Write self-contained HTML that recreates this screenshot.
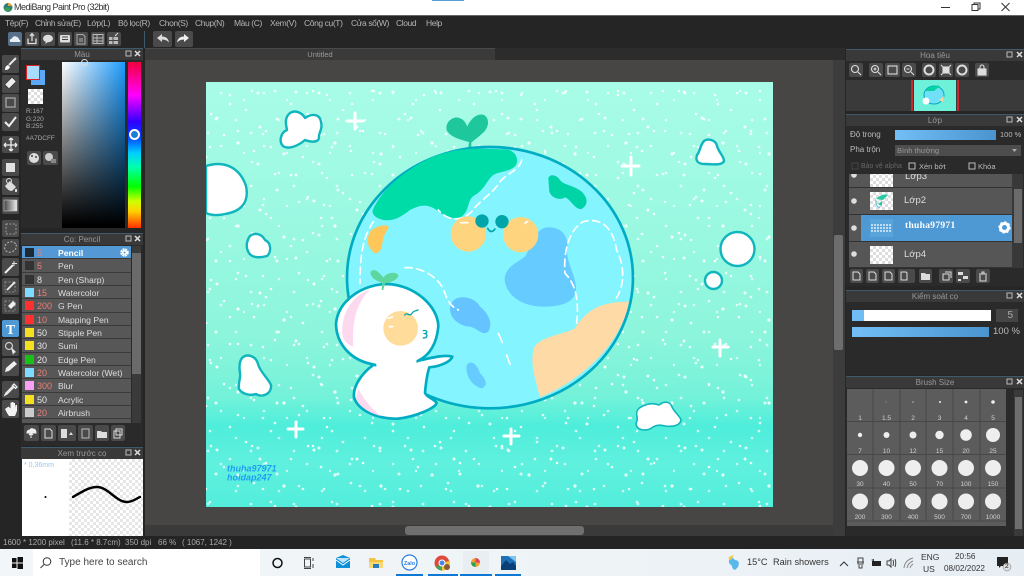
<!DOCTYPE html>
<html><head><meta charset="utf-8"><title>MediBang Paint Pro</title>
<style>
*{box-sizing:border-box}
html,body{margin:0;padding:0;width:1024px;height:576px;overflow:hidden;background:#252525;font-family:"Liberation Sans","Noto Sans CJK SC",sans-serif}
.a{position:absolute}
.t{position:absolute;white-space:nowrap;line-height:1;font-size:9px;color:#c4c4c4}
.m{position:absolute;top:19px;white-space:nowrap;line-height:1;font-size:8.5px;letter-spacing:-.4px;color:#b4b4b4}
.h{position:absolute;height:12px;background:#393939;border-top:1px solid #3f5a6c;color:#999;font-size:8px;line-height:11px;text-align:center}
.ck{background:repeating-conic-gradient(#ddd 0 25%,#fff 0 50%) 0 0/6px 6px}
.r{position:absolute;left:22px;width:109px;height:13.33px;background:#575757;border-bottom:1px solid #3a3a3a}
.r i{position:absolute;left:3px;top:2px;width:9px;height:9px}
.r b{position:absolute;left:15px;top:2px;font:400 9px/10px "Liberation Sans",sans-serif;color:#e6e6e6}
.r b.p{color:#ea7f7a}
.r span{position:absolute;left:36px;top:2px;font-size:8.6px;line-height:10px;color:#ddd;white-space:nowrap}
.lr{position:absolute;left:849px;width:163px;background:#565656;border-bottom:1px solid #333}
</style></head><body>

<!-- chrome -->
<div class="a" style="left:0;top:0;width:1024px;height:15px;background:#fff"></div>
<div class="a" style="left:432px;top:0;width:32px;height:1px;background:#5a9ed6"></div>
<div class="a" style="left:0;top:15px;width:1024px;height:1px;background:#666"></div>
<div class="a" style="left:0;top:16px;width:1024px;height:33px;background:#252525"></div>
<div class="a" style="left:144px;top:31px;width:1px;height:17px;background:#3f5a6c"></div>

<!-- canvas area -->
<div class="a" style="left:145px;top:48px;width:700px;height:488px;background:#474645"></div>
<div class="a" style="left:145px;top:48px;width:350px;height:12px;background:#3a3a3a;border-top:1px solid #4a4a4a;color:#999;font-size:7.5px;line-height:11px;text-align:center">Untitled</div>
<div class="a" style="left:495px;top:48px;width:350px;height:12px;background:#2c2c2c"></div>
<div class="a" style="left:145px;top:525px;width:690px;height:11px;background:#3a3a3a"></div>
<div class="a" style="left:833px;top:60px;width:12px;height:476px;background:#3c3c3c"></div>
<div class="a" style="left:834px;top:235px;width:9px;height:115px;background:#6d6d6d;border-radius:2px"></div>
<div class="a" style="left:405px;top:526px;width:179px;height:9px;background:#6f6f6f;border-radius:3px"></div>

<!-- art -->
<svg class="a" style="left:0;top:0" width="1024" height="576" viewBox="0 0 1024 576">
<defs>
<linearGradient id="bg" x1="0" y1="0" x2="0" y2="1">
<stop offset="0" stop-color="#a8fce7"/><stop offset=".35" stop-color="#9af8e1"/><stop offset=".6" stop-color="#8cf5dc"/><stop offset=".74" stop-color="#74f2d9"/><stop offset=".81" stop-color="#4eeedb"/><stop offset=".9" stop-color="#60f0de"/><stop offset="1" stop-color="#52eedb"/>
</linearGradient>
<pattern id="s1" width="97" height="83" patternUnits="userSpaceOnUse">
<g fill="#fff"><circle cx="5" cy="9" r="1.5"/><circle cx="17" cy="31" r="1.3"/><circle cx="23" cy="35" r="1.5"/><circle cx="36" cy="12" r="1.3"/><circle cx="44" cy="60" r="1.6"/><circle cx="52" cy="27" r="1.3"/><circle cx="60" cy="68" r="1.3"/><circle cx="66" cy="44" r="1.5"/><circle cx="72" cy="48" r="1.3"/><circle cx="81" cy="8" r="1.3"/><circle cx="90" cy="71" r="1.6"/><circle cx="12" cy="74" r="1.3"/><circle cx="30" cy="52" r="1.3"/></g>
</pattern>
<pattern id="s2" width="61" height="71" patternUnits="userSpaceOnUse">
<g fill="#fff"><circle cx="8" cy="20" r="1.3"/><circle cx="14" cy="22" r="1.5"/><circle cx="27" cy="5" r="1.3"/><circle cx="33" cy="48" r="1.5"/><circle cx="47" cy="33" r="1.3"/><circle cx="55" cy="60" r="1.3"/><circle cx="19" cy="63" r="1.3"/></g>
</pattern>
<pattern id="s3" width="43" height="53" patternUnits="userSpaceOnUse">
<g fill="#fff"><circle cx="6" cy="40" r="1.3"/><circle cx="21" cy="14" r="1.3"/><circle cx="36" cy="27" r="1.4"/><circle cx="29" cy="47" r="1.2"/></g>
</pattern>
<clipPath id="cv"><rect x="206" y="82" width="567" height="425"/></clipPath>
</defs>
<rect x="206" y="82" width="567" height="425" fill="url(#bg)"/>
<rect x="206" y="82" width="567" height="425" fill="url(#s1)" opacity=".85"/>
<rect x="206" y="82" width="567" height="425" fill="url(#s2)" opacity=".8"/>
<rect x="206" y="82" width="567" height="425" fill="url(#s3)" opacity=".7"/>

<g clip-path="url(#cv)">
<!-- stars -->
<g stroke="#fff" stroke-width="3" stroke-linecap="round">
<path d="M347 121h16M355 113v16M622 166h17M631 157v18M288 429h15M296 422v15M504 436h15M511 429v15M713 347h15M720 340v16"/>
</g>
<!-- clouds -->
<g fill="#fff" stroke="#10b5bd" stroke-width="2.4" stroke-linejoin="round">
<path d="M206 166 C225 160 240 168 246 186 C250 205 238 212 225 214 C217 216 210 215 206 213Z"/>
<path d="M290 113 C296 109 303 114 305 118 C312 113 320 114 321 122 C323 130 318 133 319 138 C318 143 310 142 305 140 C298 146 288 150 283 146 C279 142 280 133 287 130 C286 125 284 118 290 113Z"/>
<path d="M250 236 C255 232 262 234 265 240 C272 243 271 253 267 256 C260 258 252 258 249 253 C245 247 247 240 250 236Z"/>
<path d="M704 141 C708 138 716 140 717 146 C719 153 724 156 724 161 C722 166 712 164 705 164 C698 164 695 161 697 155 C700 152 700 145 704 141Z"/>
<circle cx="737.5" cy="249" r="17"/>
<circle cx="713.5" cy="280.5" r="8.5"/>
<path d="M242 358 C247 353 256 356 258 364 C260 372 268 378 271 385 C272 394 262 398 256 394 C250 396 242 394 239 389 C238 382 241 378 240 373 C239 367 239 362 242 358Z"/>
<path d="M641 407 C648 403 654 403 659 405 C664 401 670 401 672 407 C675 413 680 416 681 420 C680 426 672 427 665 426 C658 424 654 426 650 429 C644 431 637 430 636 424 C637 420 638 419 637 417 C636 412 637 409 641 407Z" stroke-width="1.6"/>
</g>
</g>

<g transform="translate(330 110) scale(.3333)">
<!-- sprout -->
<path d="M415 112 L417 96 C395 90 360 82 350 60 C345 35 370 15 392 25 C402 30 408 40 412 50 C420 30 440 8 462 15 C480 25 478 55 455 72 C445 82 430 92 424 98 L424 112Z" fill="#1fc79c"/>
<!-- globe -->
<ellipse cx="480" cy="503" rx="429" ry="392" fill="#84f4ff" stroke="#00acc3" stroke-width="8"/>
<!-- green land -->
<path d="M128 300 C150 250 200 200 270 160 C320 130 380 118 440 116 L530 118 C555 122 568 145 558 165 C545 185 505 185 490 195 C470 210 465 240 430 258 C410 275 420 300 395 320 C370 330 345 320 320 300 C290 280 270 285 240 300 C215 320 190 335 160 330 C140 325 125 315 128 300Z" fill="#00dca8"/>
<path d="M655 205 C660 190 680 195 690 210 C700 225 730 225 755 245 C775 265 775 285 755 297 C735 300 720 265 705 262 C690 272 665 265 658 245Z" fill="#00d3a5"/>
<!-- orange -->
<path d="M120 365 C135 350 165 340 177 350 C170 365 160 375 158 395 C155 415 150 430 135 430 C120 420 110 400 113 385Z" fill="#ffc65a"/>
<!-- lakes -->
<path d="M650 352 C690 348 715 375 712 410 C705 450 735 490 738 530 C740 575 700 590 640 590 C580 590 530 560 524 510 C525 470 560 460 585 440 C600 420 610 358 650 352Z" fill="#66ccff"/>
<path d="M380 565 C410 555 440 570 450 590 C475 610 490 640 475 665 C455 680 440 650 415 650 C385 645 360 625 360 595 C362 578 370 570 380 565Z" fill="#65c4ff"/>
<path d="M410 765 C425 745 445 770 450 790 C465 805 478 825 455 835 C430 830 405 800 410 765Z" fill="#66ccff"/>
<!-- sand -->
<path d="M610 720 C620 680 700 675 735 655 C770 600 810 575 897 575 C880 680 780 800 630 862 C620 820 600 770 610 720Z" fill="#fddaa6"/>
<!-- dashes -->
<g fill="none" stroke="#fff" stroke-width="5" stroke-linecap="round" stroke-dasharray="22 14">
<path d="M575 150 C570 180 530 190 510 215 C490 250 450 270 425 305 C400 330 360 340 325 300"/>
<path d="M130 335 C100 380 90 430 90 520"/>
<path d="M225 473 C270 470 330 500 345 550 C360 590 370 590 385 600"/>
<path d="M505 670 C520 700 530 740 545 775" stroke-dasharray="30 40"/>
<path d="M740 640 C745 590 745 530 705 490 C700 430 715 360 760 335 C820 320 850 360 860 420 C885 470 885 530 855 570"/>
</g>
<!-- cheeks -->
<circle cx="415" cy="372" r="53" fill="#ffd47e"/><circle cx="572" cy="374" r="53" fill="#ffd47e"/>
<path d="M392 338h22M585 340l8-6" stroke="#fff" stroke-width="5" stroke-linecap="round"/>
<circle cx="456" cy="333" r="20" fill="#00a5aa"/><circle cx="516" cy="335" r="20" fill="#00a5aa"/>
<path d="M473 355q10 18 22 2" fill="none" stroke="#00a5aa" stroke-width="5" stroke-linecap="round"/>
<!-- character -->
<path d="M130 765 C95 790 68 830 72 862 C85 905 150 928 205 926 C255 920 318 895 320 878 C305 862 290 862 285 848 C288 815 292 790 298 772 C330 770 362 755 367 740 C340 733 300 745 265 752Z" fill="#fff" stroke="#00acc1" stroke-width="8" stroke-linejoin="round"/>
<path d="M85 835 C100 870 130 900 152 918 C120 910 85 890 78 865Z" fill="#fdd9f0"/>
<path d="M128 763 C60 750 18 700 18 640 C25 570 100 522 172 522 C255 525 325 590 325 650 C320 700 300 735 265 752 C220 775 170 775 128 763Z" fill="#fff" stroke="#00acc1" stroke-width="8"/>
<path d="M38 680 C30 620 60 560 120 538 C85 575 65 620 70 710 C55 705 42 695 38 680Z" fill="#fdd9f0"/>
<path d="M138 740 L258 735 L262 790 L140 790Z" fill="#fff"/>
<circle cx="212" cy="655" r="52" fill="#ffdc9a"/>
<path d="M175 625l12-4M178 650h10" stroke="#fff" stroke-width="5" stroke-linecap="round"/>
<path d="M224 615 C232 605 238 622 246 610 C252 600 258 604 264 600" fill="none" stroke="#00a5aa" stroke-width="4" stroke-linecap="round"/>
<path d="M280 662 C292 660 294 668 285 671 C294 673 293 684 280 684" fill="none" stroke="#00a5aa" stroke-width="4" stroke-linecap="round"/>
<path d="M155 540 L157 518 C140 515 118 500 122 485 C135 472 150 490 160 503 C170 488 195 483 205 495 C205 510 180 518 165 520 L160 540Z" fill="#5ed79e"/>
</g>
<text x="227" y="471.5" font-family="Liberation Sans" font-size="9" font-weight="700" font-style="italic" fill="#1e9ff5">thuha97971</text>
<text x="227" y="480.5" font-family="Liberation Sans" font-size="9" font-weight="700" font-style="italic" fill="#1e9ff5">hoidap247</text>

<!-- left dock backgrounds -->
<rect x="0" y="48" width="145" height="488" fill="#252525"/>
</svg>

<!-- title bar -->
<svg class="a" style="left:3px;top:2px" width="10" height="11" viewBox="0 0 10 11"><circle cx="5" cy="5.5" r="4.5" fill="#2f7f7a"/><path d="M5 1a4.5 4.5 0 0 1 4 3H5z" fill="#e8a23a"/><path d="M1 7a4.500 4.500 0 0 0 7 1L5 5z" fill="#3da04f"/></svg>
<div class="t" style="left:14px;top:3px;font-size:9px;letter-spacing:-.5px;color:#333">MediBang Paint Pro (32bit)</div>
<svg class="a" style="left:935px;top:0" width="89" height="15" viewBox="0 0 89 15" fill="none" stroke="#333"><path d="M6 7.5h9"/><rect x="37" y="4.500" width="6" height="6"/><path d="M39 4.5v-1.500h6v6h-2"/><path d="M66.5 3l8 8M74.5 3l-8 8"/></svg>

<!-- menu -->
<div class="m" style="left:5px">Tệp(F)</div>
<div class="m" style="left:35px">Chỉnh sửa(E)</div>
<div class="m" style="left:87px">Lớp(L)</div>
<div class="m" style="left:118px">Bộ lọc(R)</div>
<div class="m" style="left:159px">Chọn(S)</div>
<div class="m" style="left:195px">Chụp(N)</div>
<div class="m" style="left:234px">Màu (C)</div>
<div class="m" style="left:270px">Xem(V)</div>
<div class="m" style="left:304px">Công cụ(T)</div>
<div class="m" style="left:351px">Cửa sổ(W)</div>
<div class="m" style="left:396px">Cloud</div>
<div class="m" style="left:426px">Help</div>

<!-- toolbar + toolbox icons -->
<svg class="a" style="left:0;top:30px" width="200" height="20" viewBox="0 30 200 20">
<rect x="8" y="32" width="14" height="14" rx="2" fill="#56708a"/>
<g fill="#4a4a4a"><rect x="25" y="32" width="14" height="14" rx="2"/><rect x="41" y="32" width="14" height="14" rx="2"/><rect x="58" y="32" width="14" height="14" rx="2"/><rect x="74" y="32" width="14" height="14" rx="2"/><rect x="91" y="32" width="14" height="14" rx="2"/><rect x="107" y="32" width="14" height="14" rx="2"/><rect x="153" y="31" width="19" height="16" rx="2"/><rect x="175" y="31" width="18" height="16" rx="2"/></g>
<path d="M10 42q-1-3 2-3.500q1-3 4-2t3 3q2 .5 1 2.500z" fill="#e8eef4"/>
<path d="M28 38.5v5h8v-5M32 41v-7M30 36l2-2.500 2 2.500" fill="none" stroke="#ddd" stroke-width="1.300"/>
<ellipse cx="48" cy="38.5" rx="5" ry="3.800" fill="#ddd"/><path d="M46 41.5l-1 2.500 3-2z" fill="#ddd"/>
<rect x="60" y="35" width="10" height="7.500" rx="1" fill="#ddd"/><path d="M62 37h6M62 39.5h6" stroke="#444"/>
<path d="M77 34.5h6l2 2v7.500h-8z" fill="none" stroke="#aaa"/><path d="M79 39h4M79 41h4" stroke="#aaa"/>
<path d="M93 34.5h10v9h-10zM93 38h10M93 41h10M97 34.5v9" fill="none" stroke="#bbb"/>
<rect x="109" y="37" width="9" height="7" fill="#bbb"/><path d="M113 37v7M109 40.5h9" stroke="#444"/><path d="M115 36l3-3" stroke="#ddd"/>
<path d="M157 38l5-4v2.500q6 0 7 6q-2.500-3-7-3v2.500z" fill="#ddd"/>
<path d="M189 38l-5-4v2.500q-6 0-7 6q2.500-3 7-3v2.500z" fill="#eee"/>
</svg>

<!-- toolbox -->
<div class="a" style="left:0;top:48px;width:21px;height:488px;background:#252525"></div>
<svg class="a" style="left:0;top:50px" width="21" height="375" viewBox="0 50 21 375">
<g fill="#4a4a4a">
<rect x="2" y="55" width="17" height="18" rx="2"/><rect x="2" y="75" width="17" height="18" rx="2"/><rect x="2" y="94" width="17" height="18" rx="2"/><rect x="2" y="113" width="17" height="18" rx="2"/><rect x="2" y="136" width="17" height="17" rx="2"/><rect x="2" y="159" width="17" height="17" rx="2"/><rect x="2" y="178" width="17" height="17" rx="2"/><rect x="2" y="197" width="17" height="17" rx="2"/><rect x="2" y="220" width="17" height="17" rx="2"/><rect x="2" y="239" width="17" height="17" rx="2"/><rect x="2" y="258" width="17" height="18" rx="2"/><rect x="2" y="278" width="17" height="17" rx="2"/><rect x="2" y="297" width="17" height="17" rx="2"/><rect x="2" y="339" width="17" height="17" rx="2"/><rect x="2" y="358" width="17" height="18" rx="2"/><rect x="2" y="381" width="17" height="17" rx="2"/><rect x="2" y="400" width="17" height="18" rx="2"/>
</g>
<rect x="2" y="320" width="17" height="17" rx="2" fill="#4f9ad6"/>
<path d="M16 58l-7 7" stroke="#e8e8e8" stroke-width="2"/><path d="M5 70q0-4 3-5l2 2q-1 3-5 3z" fill="#fff"/>
<path d="M5 86l7-7 4 4-7 7z" fill="#eee" stroke="#333" stroke-width=".5" transform="translate(0 -1.5)"/>
<rect x="6" y="98" width="9" height="9" fill="none" stroke="#999" stroke-width="1.5"/>
<path d="M5 122l4 4 7-9" fill="none" stroke="#eee" stroke-width="2"/>
<path d="M11 138v13M4 145h13M11 138l-2 2M11 138l2 2M11 151l-2-2M11 151l2-2M4 145l2-2M4 145l2 2M17 145l-2-2M17 145l-2 2" stroke="#eee" stroke-width="1.3" fill="none"/>
<rect x="6" y="163" width="9" height="9" fill="#e2e2e2"/>
<path d="M5 186l5-5 6 6-4 4q-4 0-7-5z" fill="#ddd"/><circle cx="9" cy="181" r="2.5" fill="none" stroke="#ddd"/><path d="M16 189v3" stroke="#ddd" stroke-width="2"/>
<defs><linearGradient id="gr" x1="0" x2="1"><stop offset="0" stop-color="#444"/><stop offset="1" stop-color="#eee"/></linearGradient></defs>
<rect x="4" y="200" width="13" height="11" fill="url(#gr)" stroke="#ccc" stroke-width=".6"/>
<rect x="6" y="224" width="10" height="10" fill="none" stroke="#999" stroke-dasharray="2 1.5"/>
<ellipse cx="10.5" cy="247" rx="6" ry="5" fill="none" stroke="#bbb" stroke-dasharray="2 1.5" transform="rotate(-25 10.5 247)"/>
<path d="M5 273l8-8" stroke="#eee" stroke-width="2"/><path d="M14 261v5M12 263.500h5" stroke="#ddd"/>
<rect x="5" y="282" width="10" height="10" fill="none" stroke="#888" stroke-dasharray="2 1.5"/><path d="M7 290l8-8" stroke="#eee" stroke-width="1.8"/>
<rect x="5" y="301" width="10" height="10" fill="none" stroke="#888" stroke-dasharray="2 1.5"/><path d="M8 306l5-5 3 3-5 5z" fill="#eee"/>
<text x="10.5" y="334" font-family="Liberation Serif" font-size="14" font-weight="700" text-anchor="middle" fill="#fff">T</text>
<circle cx="9" cy="346" r="3.5" fill="none" stroke="#ccc" stroke-width="1.2"/><path d="M11 347l5 5-2 1-1 2z" fill="#eee"/>
<path d="M5 372l1-4 8-7 3 3-8 7z" fill="#eee"/>
<path d="M14 384l3 3-1.5 1.5-3-3zM13 386l-7 7-1 2 2-1 7-7" fill="none" stroke="#eee" stroke-width="1.3"/>
<path d="M5 409l2 4 2 3h6l2-5v-6h-1.5l-.5 3v-5h-1.5v4v-5h-1.5v5v-4.5h-1.5v6l-2-2z" fill="#f2f2f2"/>
</svg>

<!-- Colour panel -->
<div class="h" style="left:21px;top:48px;width:122px">Màu</div>
<div class="a" style="left:21px;top:60px;width:122px;height:168px;background:#2a2a2a"></div>
<div class="a" style="left:62px;top:62px;width:63px;height:166px;background:linear-gradient(transparent,#000 98%),linear-gradient(90deg,#fff,#1d9cff)"></div>
<div class="a" style="left:128px;top:62px;width:13px;height:166px;background:linear-gradient(#f0003c 0,#ff00c0 14%,#ff00ff 20%,#3000ff 36%,#0040ff 45%,#00d0ff 55%,#00ffb0 63%,#00ff00 75%,#d0ff00 84%,#ffd000 90%,#ff3000 100%)"></div>
<div class="a" style="left:129px;top:129px;width:11px;height:11px;border-radius:50%;border:2px solid #fff;background:#1a7fd0"></div>
<div class="a" style="left:81px;top:59px;width:7px;height:7px;border-radius:50%;border:1px solid #ddd"></div>
<div class="a" style="left:31px;top:70px;width:14px;height:15px;background:#5ba8f5"></div>
<div class="a" style="left:26px;top:65px;width:14px;height:15px;background:#a7dcff;border:1px solid #d22"></div>
<div class="a ck" style="left:28px;top:89px;width:15px;height:15px"></div>
<div class="t" style="left:26px;top:109px;font-size:6.5px;color:#aaa">R:167</div>
<div class="t" style="left:26px;top:117px;font-size:6.5px;color:#aaa">G:220</div>
<div class="t" style="left:26px;top:124px;font-size:6.5px;color:#aaa">B:255</div>
<div class="t" style="left:26px;top:136px;font-size:6.5px;color:#aaa">#A7DCFF</div>
<svg class="a" style="left:26px;top:150px" width="33" height="16"><rect x="1" y="1" width="14" height="14" rx="2" fill="#4a4a4a"/><rect x="17" y="1" width="15" height="14" rx="2" fill="#4a4a4a"/><circle cx="8" cy="8" r="5" fill="#ddd"/><circle cx="6" cy="6" r="1" fill="#444"/><circle cx="10" cy="7" r="1" fill="#444"/><circle cx="23" cy="7" r="4" fill="#ccc"/><rect x="25" y="9" width="5" height="4" fill="#888"/></svg>

<!-- brush panel -->
<div class="h" style="left:21px;top:233px;width:122px">Cọ: Pencil</div>
<div class="a" style="left:21px;top:245px;width:122px;height:201px;background:#2a2a2a"></div>
<div class="r" style="top:246px;background:#5499d5;width:109px"><i style="background:#1d2a35"></i><b class="p">5</b><span style="font-weight:700;color:#fff">Pencil</span></div>
<div class="r" style="top:259.3px"><i style="background:#333"></i><b class="p">5</b><span>Pen</span></div>
<div class="r" style="top:272.7px"><i style="background:#333"></i><b>8</b><span>Pen (Sharp)</span></div>
<div class="r" style="top:286px"><i style="background:#7fdcff"></i><b class="p">15</b><span>Watercolor</span></div>
<div class="r" style="top:299.3px"><i style="background:#ff3030"></i><b class="p">200</b><span>G Pen</span></div>
<div class="r" style="top:312.7px"><i style="background:#ff3030"></i><b class="p">10</b><span>Mapping Pen</span></div>
<div class="r" style="top:326px"><i style="background:#f4e020"></i><b>50</b><span>Stipple Pen</span></div>
<div class="r" style="top:339.3px"><i style="background:#f4e020"></i><b>30</b><span>Sumi</span></div>
<div class="r" style="top:352.7px"><i style="background:#18c018"></i><b>20</b><span>Edge Pen</span></div>
<div class="r" style="top:366px"><i style="background:#7fdcff"></i><b class="p">20</b><span>Watercolor (Wet)</span></div>
<div class="r" style="top:379.3px"><i style="background:#f8a0f8"></i><b class="p">300</b><span>Blur</span></div>
<div class="r" style="top:392.7px"><i style="background:#f4e020"></i><b>50</b><span>Acrylic</span></div>
<div class="r" style="top:406px"><i style="background:#ccc"></i><b class="p">20</b><span>Airbrush</span></div>
<div class="a" style="left:22px;top:419.3px;width:109px;height:4px;background:#575757"></div>
<div class="a" style="left:132px;top:246px;width:9px;height:177px;background:#3a3a3a"></div>
<div class="a" style="left:132px;top:253px;width:9px;height:121px;background:#6a6a6a"></div>
<svg class="a" style="left:119px;top:247px" width="11" height="11" viewBox="0 0 11 11"><circle cx="5.5" cy="5.5" r="3" fill="none" stroke="#fff" stroke-width="2.5" stroke-dasharray="1.8 .6"/><circle cx="5.5" cy="5.5" r="2.500" fill="#fff"/><circle cx="5.5" cy="5.5" r="1" fill="#5499d5"/></svg>
<svg class="a" style="left:22px;top:424px" width="122" height="20" viewBox="22 424 122 20">
<g fill="#4a4a4a"><rect x="24" y="425" width="15" height="16" rx="2"/><rect x="41" y="425" width="15" height="16" rx="2"/><rect x="58" y="425" width="18" height="16" rx="2"/><rect x="78" y="425" width="15" height="16" rx="2"/><rect x="95" y="425" width="14" height="16" rx="2"/><rect x="111" y="425" width="14" height="16" rx="2"/></g>
<path d="M27 433q0-3 3-3q1-2 3-1q3 0 3 4zM31 433v5M29 435l2-2 2 2" fill="#eee" stroke="#eee"/>
<path d="M45 429h5l2 2v7h-7z" fill="none" stroke="#ddd"/>
<path d="M61 429h6v9h-6z" fill="#ddd"/><path d="M71 432l2 3h-4z" fill="#ddd"/>
<path d="M82 429h7v9h-7z" fill="none" stroke="#bbb"/>
<path d="M97 431h4l1 1h5v6h-10z" fill="#ddd"/>
<path d="M116 429h6v6h-6zM114 431h6v7h-6z" fill="#444" stroke="#ddd"/>
</svg>

<!-- preview -->
<div class="h" style="left:21px;top:447px;width:122px">Xem trước cọ</div>
<div class="a" style="left:22px;top:459px;width:47px;height:77px;background:#fff"></div>
<div class="a" style="left:69px;top:459px;width:74px;height:77px;background:repeating-conic-gradient(#e6e6e6 0 25%,#fff 0 50%) 0 0/6px 6px"></div>
<div class="t" style="left:24px;top:462px;font-size:7px;color:#9cc4e8">* 0,36mm</div>
<svg class="a" style="left:22px;top:459px" width="121" height="77" viewBox="22 459 121 77"><circle cx="45.5" cy="497" r="1" fill="#000"/><path d="M73 497C85 490 90 487 97 487C108 487 116 502 127 502C133 502 137 498 140 497" fill="none" stroke="#000" stroke-width="2.4" stroke-linecap="round"/></svg>

<!-- status bar -->
<div class="a" style="left:0;top:536px;width:1024px;height:13px;background:#242424"></div>
<div class="t" style="left:3px;top:539px;font-size:8px;color:#aaa">1600 * 1200 pixel</div>
<div class="t" style="left:71px;top:539px;font-size:8px;color:#aaa">(11.6 * 8.7cm)</div>
<div class="t" style="left:125px;top:539px;font-size:8px;color:#aaa">350 dpi</div>
<div class="t" style="left:158px;top:539px;font-size:8px;color:#aaa">66 %</div>
<div class="t" style="left:182px;top:539px;font-size:8px;color:#aaa">( 1067, 1242 )</div>

<!-- RIGHT DOCK -->
<div class="a" style="left:845px;top:48px;width:179px;height:488px;background:#262626"></div>
<div class="h" style="left:846px;top:49px;width:178px">Hoa tiêu</div>
<div class="a" style="left:846px;top:61px;width:178px;height:19px;background:#2a2a2a"></div>
<div class="a" style="left:846px;top:80px;width:178px;height:31px;background:#3a3a3a"></div>
<svg class="a" style="left:911px;top:80px" width="48" height="31" viewBox="0 0 48 31"><rect x="0" y="0" width="2" height="31" fill="#c8282d"/><rect x="46" y="0" width="2" height="31" fill="#c8282d"/><rect x="3" y="0" width="42" height="31" fill="#6ff0d8"/><ellipse cx="23" cy="15" rx="10" ry="9" fill="#6fe0f5" stroke="#00acc1"/><path d="M14 11q8-7 15-5l-6 5z" fill="#00d4a0"/><circle cx="15" cy="21" r="3.5" fill="#fff"/><path d="M28 20l5-4-1 6z" fill="#fbd5a0"/></svg>
<svg class="a" style="left:848px;top:61px" width="150" height="20" viewBox="848 61 150 20">
<g fill="#4a4a4a"><rect x="849" y="63" width="14" height="14" rx="2"/><rect x="869" y="63" width="14" height="14" rx="2"/><rect x="885" y="63" width="15" height="14" rx="2"/><rect x="902" y="63" width="14" height="14" rx="2"/><rect x="922" y="63" width="14" height="14" rx="2"/><rect x="939" y="63" width="14" height="14" rx="2"/><rect x="955" y="63" width="14" height="14" rx="2"/><rect x="975" y="63" width="14" height="14" rx="2"/></g>
<g fill="none" stroke="#ddd" stroke-width="1.1"><circle cx="855" cy="69" r="3.5"/><path d="M858 72l3 3"/><circle cx="875" cy="69" r="3.5"/><path d="M878 72l3 3M873.5 69h3M875 67.5v3"/><rect x="888" y="66" width="9" height="8"/><circle cx="908" cy="69" r="3.5"/><path d="M911 72l3 3M906.5 69h3"/><circle cx="929" cy="70" r="4.5" stroke-width="2"/><rect x="943" y="67" width="6" height="6" fill="#ddd"/><path d="M941 65l2 2M951 65l-2 2M941 75l2-2M951 75l-2-2"/><circle cx="962" cy="70" r="4.5" stroke-width="2"/><rect x="978" y="69" width="8" height="6" fill="#ddd"/><path d="M980 69v-2a2 2 0 0 1 4 0v2"/></g>
</svg>

<div class="h" style="left:846px;top:114px;width:178px">Lớp</div>
<div class="a" style="left:846px;top:126px;width:178px;height:160px;background:#2a2a2a"></div>
<div class="t" style="left:850px;top:131px;font-size:8px;color:#bbb">Độ trong</div>
<div class="a" style="left:895px;top:130px;width:101px;height:10px;background:linear-gradient(90deg,#72bef5,#4a94d0)"></div>
<div class="t" style="left:1000px;top:131px;font-size:7.5px;color:#bbb">100 %</div>
<div class="t" style="left:850px;top:146px;font-size:8px;color:#bbb">Pha trộn</div>
<div class="a" style="left:895px;top:145px;width:126px;height:11px;background:#4d4d4d"></div>
<div class="t" style="left:897px;top:147px;font-size:7.5px;color:#999">Bình thường</div>
<svg class="a" style="left:1012px;top:148px" width="6" height="5"><path d="M0 1h5l-2.5 3z" fill="#aaa"/></svg>
<svg class="a" style="left:851px;top:161px" width="125" height="11" fill="none"><rect x="1" y="2" width="6" height="6" stroke="#444"/><rect x="58" y="2" width="6" height="6" stroke="#bbb"/><rect x="118" y="2" width="6" height="6" stroke="#bbb"/></svg>
<div class="t" style="left:861px;top:163px;font-size:7px;color:#666">Bảo vệ alpha</div>
<div class="t" style="left:919px;top:163px;font-size:7.5px;color:#bbb">Xén bớt</div>
<div class="t" style="left:978px;top:163px;font-size:7.5px;color:#bbb">Khóa</div>

<div class="lr" style="top:174px;height:14px;overflow:hidden"><div class="a ck" style="left:21px;top:-5px;width:23px;height:18px"></div><span class="t" style="left:56px;top:-2px;font-size:9.5px;color:#ddd">Lớp3</span></div>
<div class="lr" style="top:188px;height:27px"><div class="a ck" style="left:21px;top:4px;width:23px;height:18px"></div><span class="t" style="left:55px;top:8px;font-size:9.5px;color:#ddd">Lớp2</span></div>
<svg class="a" style="left:870px;top:192px" width="23" height="18"><path d="M6 7q6-6 12-4l-5 5zM8 12l4-3v5z" fill="#27c9a5"/><path d="M6 8q-1 6 4 8" stroke="#56c0e0" fill="none"/></svg>
<div class="lr" style="top:215px;height:27px"></div>
<div class="a" style="left:861px;top:215px;width:151px;height:25.5px;background:#4e98d3"></div>
<div class="a" style="left:870px;top:219px;width:23px;height:18px;background:#5aa4dc"></div>
<svg class="a" style="left:870px;top:223px" width="23" height="10"><path d="M1 2h20M1 5h20M1 8h20" stroke="#dfeffa" stroke-width="1.5" stroke-dasharray="2 1"/></svg>
<div class="t" style="left:905px;top:222px;font:700 9.5px/1 'Liberation Serif',serif;letter-spacing:.3px;color:#fff">thuha97971</div>
<svg class="a" style="left:998px;top:221px" width="13" height="13" viewBox="0 0 13 13"><circle cx="6.5" cy="6.5" r="4" fill="none" stroke="#fff" stroke-width="3"/><circle cx="6.5" cy="6.5" r="5.3" fill="none" stroke="#fff" stroke-width="1.8" stroke-dasharray="2 2.1"/></svg>
<div class="lr" style="top:242px;height:26px"><div class="a ck" style="left:21px;top:4px;width:23px;height:18px"></div><span class="t" style="left:55px;top:8px;font-size:9.5px;color:#ddd">Lớp4</span></div>
<svg class="a" style="left:849px;top:174px" width="12" height="94"><g fill="#ddd"><circle cx="5" cy="1" r="2.8"/><circle cx="5" cy="27" r="2.8"/><circle cx="5" cy="54" r="2.8"/><circle cx="5" cy="80" r="2.8"/></g></svg>
<div class="a" style="left:1012px;top:174px;width:11px;height:94px;background:#383838"></div>
<div class="a" style="left:1014px;top:189px;width:8px;height:54px;background:#6a6a6a"></div>
<svg class="a" style="left:848px;top:268px" width="150" height="17" viewBox="848 268 150 17">
<g fill="#4a4a4a"><rect x="850" y="269" width="13" height="14" rx="2"/><rect x="866" y="269" width="13" height="14" rx="2"/><rect x="882" y="269" width="13" height="14" rx="2"/><rect x="898" y="269" width="17" height="14" rx="2"/><rect x="919" y="269" width="13" height="14" rx="2"/><rect x="939" y="269" width="14" height="14" rx="2"/><rect x="956" y="269" width="14" height="14" rx="2"/><rect x="976" y="269" width="14" height="14" rx="2"/></g>
<g fill="none" stroke="#ddd"><path d="M853 272h5l2 2v6h-7zM869 272h5l2 2v6h-7zM885 272h5l2 2v6h-7zM901 272h5l1 1v7h-6z"/><path d="M943 274h6v6h-6zM945 272h6v6"/><path d="M979 274h8M980 275v6h6v-6M982 274v-2h2v2"/></g>
<path d="M921 273h4l1 1h4v6h-9z" fill="#ddd"/><rect x="958" y="272" width="5" height="3" fill="#ddd"/><rect x="963" y="276" width="5" height="3" fill="#ddd"/><rect x="958" y="279" width="3" height="2" fill="#ddd"/>
</svg>

<div class="h" style="left:846px;top:290px;width:178px">Kiểm soát cọ</div>
<div class="a" style="left:846px;top:302px;width:178px;height:73px;background:#2a2a2a"></div>
<div class="a" style="left:852px;top:310px;width:139px;height:11px;background:#fff"></div>
<div class="a" style="left:852px;top:310px;width:12px;height:11px;background:#70bdf5"></div>
<div class="a" style="left:996px;top:309px;width:22px;height:13px;background:#454545;color:#aaa;font-size:10px;line-height:13px;text-align:right;padding-right:5px">5</div>
<div class="a" style="left:852px;top:327px;width:137px;height:10px;background:linear-gradient(90deg,#72bef5,#4a94d0)"></div>
<div class="t" style="left:993px;top:327px;font-size:9.5px;color:#bbb">100 %</div>

<div class="h" style="left:846px;top:376px;width:178px">Brush Size</div>
<div class="a" style="left:846px;top:388px;width:178px;height:148px;background:#2a2a2a"></div>
<svg class="a" style="left:846px;top:388px" width="178" height="148" viewBox="846 388 178 148">
<rect x="847" y="389" width="159" height="137" fill="#5c5c5c"/>
<g stroke="#484848" stroke-width="1"><path d="M873 389v132M900 389v132M926 389v132M953 389v132M980 389v132M847 421.5h159M847 454.5h159M847 488h159M847 521h159"/></g>
<rect x="1014" y="390" width="9" height="146" fill="#3a3a3a"/><rect x="1015" y="397" width="7" height="132" fill="#6e6e6e"/>
<g fill="#eee">
<circle cx="886" cy="402" r=".4"/><circle cx="913" cy="402" r=".6"/><circle cx="940" cy="402" r="1"/><circle cx="966" cy="402" r="1.4"/><circle cx="993" cy="402" r="1.8"/>
<circle cx="860" cy="435" r="2.2"/><circle cx="886.5" cy="435" r="3"/><circle cx="913" cy="435" r="3.5"/><circle cx="939.5" cy="435" r="4.2"/><circle cx="966" cy="435" r="5.8"/><circle cx="993" cy="435" r="7"/>
<circle cx="860" cy="468" r="8"/><circle cx="886.5" cy="468" r="8"/><circle cx="913" cy="468" r="8"/><circle cx="939.5" cy="468" r="8"/><circle cx="966" cy="468" r="8"/><circle cx="993" cy="468" r="8"/>
<circle cx="860" cy="501.5" r="8"/><circle cx="886.5" cy="501.5" r="8"/><circle cx="913" cy="501.5" r="8"/><circle cx="939.5" cy="501.5" r="8"/><circle cx="966" cy="501.5" r="8"/><circle cx="993" cy="501.5" r="8"/>
</g>
<g font-family="Liberation Sans" font-size="6.5" fill="#d0d0d0" text-anchor="middle">
<text x="860" y="420">1</text><text x="886.5" y="420">1.5</text><text x="913" y="420">2</text><text x="939.5" y="420">3</text><text x="966" y="420">4</text><text x="993" y="420">5</text>
<text x="860" y="453">7</text><text x="886.5" y="453">10</text><text x="913" y="453">12</text><text x="939.5" y="453">15</text><text x="966" y="453">20</text><text x="993" y="453">25</text>
<text x="860" y="486">30</text><text x="886.5" y="486">40</text><text x="913" y="486">50</text><text x="939.5" y="486">70</text><text x="966" y="486">100</text><text x="993" y="486">150</text>
<text x="860" y="519">200</text><text x="886.5" y="519">300</text><text x="913" y="519">400</text><text x="939.5" y="519">500</text><text x="966" y="519">700</text><text x="993" y="519">1000</text>
</g>
</svg>

<!-- panel close icons -->
<svg class="a" style="left:0;top:0" width="1024" height="460" fill="none" stroke="#bbb">
<g stroke-width="1"><path d="M126 51h5v5h-5zM126 236h5v5h-5zM126 450h5v5h-5zM1007 52h5v5h-5zM1007 117h5v5h-5zM1007 293h5v5h-5zM1007 379h5v5h-5z"/></g>
<g stroke="#ddd" stroke-width="1.5"><path d="M135 51l5 5M140 51l-5 5M135 236l5 5M140 236l-5 5M135 450l5 5M140 450l-5 5M1017 52l5 5M1022 52l-5 5M1017 117l5 5M1022 117l-5 5M1017 293l5 5M1022 293l-5 5M1017 379l5 5M1022 379l-5 5"/></g>
</svg>

<!-- taskbar -->
<div class="a" style="left:0;top:549px;width:1024px;height:27px;background:linear-gradient(90deg,#f2f6f8,#eef3f6 60%,#e6eef4)"></div>
<div class="a" style="left:33px;top:549px;width:227px;height:27px;background:#fff"></div>
<svg class="a" style="left:0;top:549px" width="1024" height="27" viewBox="0 549 1024 27">
<g fill="#111"><rect x="12" y="558" width="4.5" height="4.5"/><rect x="17.5" y="557" width="5.5" height="5.5"/><rect x="12" y="563.5" width="4.5" height="4.5"/><rect x="17.5" y="563.5" width="5.5" height="5.5"/></g>
<circle cx="47" cy="561.5" r="3.8" fill="none" stroke="#333"/><path d="M44 564.5l-3.5 3.5" stroke="#333"/>
<circle cx="277.5" cy="563" r="4.5" fill="none" stroke="#111" stroke-width="1.5"/>
<path d="M304.5 559h6v8h-6zM304 557.5h7M304 568.5h7M313 558v3M313 564v4" fill="none" stroke="#444"/>
<path d="M336 558l7-3 7 3v10h-14z" fill="#0f8fd8"/><path d="M336 558l7 5 7-5" fill="#bfe4f8"/><path d="M336 560l7 5 7-5" fill="none" stroke="#fff"/>
<path d="M369 558h6l1 2h7v8h-14z" fill="#f4c340"/><rect x="369" y="562" width="14" height="6" fill="#f9d976"/><rect x="373" y="564" width="6" height="4" fill="#2a7db8"/>
<circle cx="409.5" cy="562.5" r="7.5" fill="#fff" stroke="#2a7de0" stroke-width="1.2"/><text x="409.5" y="565" font-family="Liberation Sans" font-size="5.5" font-weight="700" text-anchor="middle" fill="#2a7de0">Zalo</text>
<circle cx="442" cy="563" r="7.5" fill="#dd4b3c"/><path d="M442 563l7-2a7.5 7.5 0 0 1-7 9.5z" fill="#f4c430"/><path d="M442 563l-6 4a7.5 7.5 0 0 0 6 3.5z" fill="#3aa757"/><circle cx="442" cy="563" r="3" fill="#4a85e8" stroke="#fff"/><circle cx="447" cy="567" r="3" fill="#8a5a3a"/>
<rect x="463" y="551" width="26" height="23" fill="#e8eef2"/>
<circle cx="475.5" cy="562.5" r="4.5" fill="#f0a030"/><path d="M475.5 562.5v4.5a4.5 4.5 0 0 1-4.5-4.5z" fill="#28a050"/><path d="M475.5 558a4.5 4.5 0 0 1 4.5 4.5h-4.5z" fill="#e04060"/>
<rect x="501" y="556" width="15" height="14" fill="#2070b8"/><path d="M501 566l5-6 4 4 3-2 3 4v4h-15z" fill="#0b3f78"/><path d="M508 556h8v6z" fill="#7ec4f0"/>
<g fill="#0f78d4"><rect x="396" y="574" width="27" height="2"/><rect x="428" y="574" width="30" height="2"/><rect x="460" y="574" width="32" height="2"/><rect x="495" y="574" width="26" height="2"/></g>
<path d="M729 560l3-3 3 3q3 0 4 3l-1 4-3 3q-3-1-3-4l-3-3z" fill="#5ab8ec"/><path d="M728 558l3 2 3-5-3 1z" fill="#f2c940"/>
<path d="M840 566l4-4 4 4" fill="none" stroke="#333"/>
<path d="M858 558h5v6h-5zM859 565v3h3v-3M857 562h7" fill="none" stroke="#444"/>
<rect x="872" y="561" width="9" height="5" fill="#222"/><path d="M871 560l3-1v2z" fill="#222"/>
<path d="M887 561h2l2-2v8l-2-2h-2z" fill="none" stroke="#444"/><path d="M893 560q1 3 0 6M895 559q1.5 4 0 8" fill="none" stroke="#444"/>
<path d="M904 568q1-8 9-10M907 568q1-5 6-7M910 568q.5-2 3-4" fill="none" stroke="#888"/>
<path d="M997 557h11v9h-7l-2 2v-2h-2z" fill="#222"/><circle cx="1007" cy="567" r="4" fill="#ddd" stroke="#777" stroke-width=".5"/>
</svg>
<div class="t" style="left:59px;top:558px;font-size:10px;color:#444">Type here to search</div>
<div class="t" style="left:747px;top:558px;font-size:9.2px;color:#333">15°C</div>
<div class="t" style="left:773px;top:558px;font-size:9.2px;color:#333">Rain showers</div>
<div class="t" style="left:921px;top:553px;font-size:8.5px;color:#333">ENG</div>
<div class="t" style="left:923px;top:565px;font-size:8.5px;color:#333">US</div>
<div class="t" style="left:955px;top:553px;font-size:8.2px;color:#333">20:56</div>
<div class="t" style="left:944px;top:565px;font-size:8.2px;color:#333">08/02/2022</div>
<div class="t" style="left:1005px;top:564px;font-size:6.5px;color:#111">2</div>
</body></html>
